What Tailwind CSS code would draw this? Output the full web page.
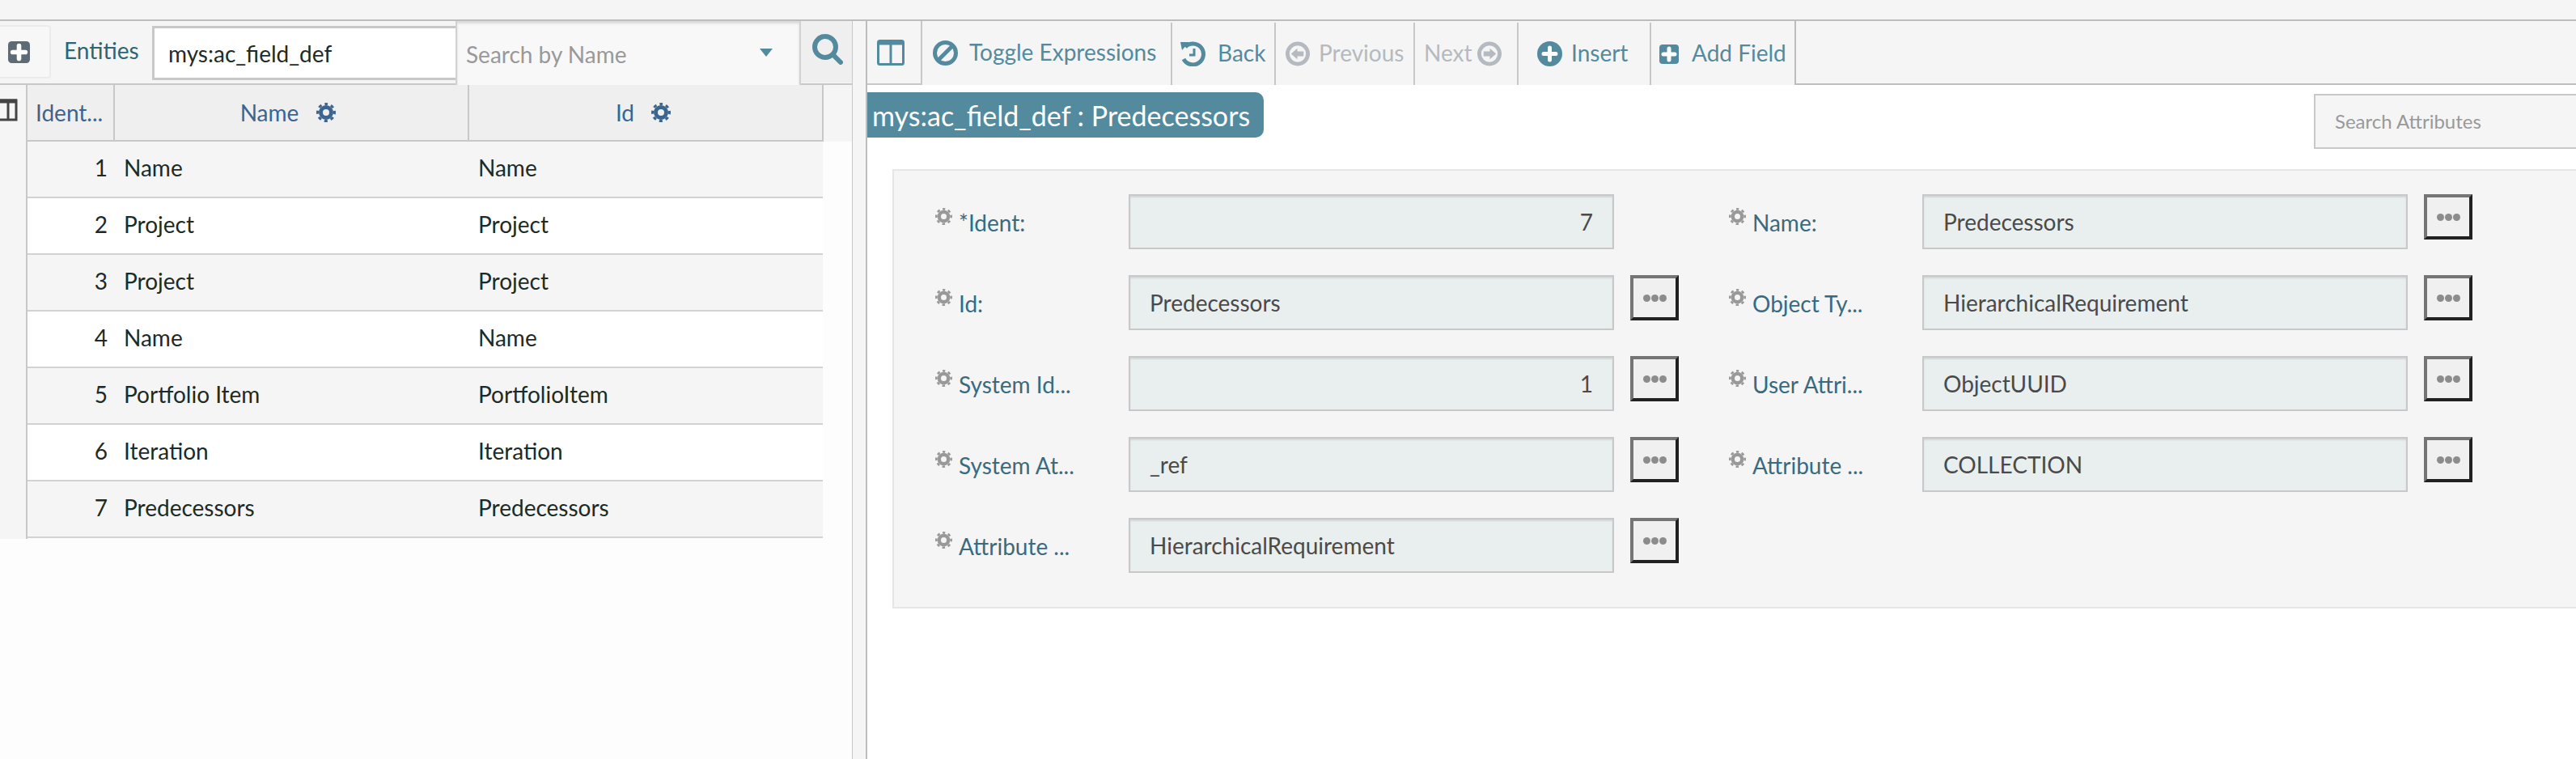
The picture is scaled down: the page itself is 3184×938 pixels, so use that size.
<!DOCTYPE html>
<html lang="en">
  <head>
    <meta charset="UTF-8" />
    <title>Entities</title>
    <script src="https://cdn.jsdelivr.net/npm/@tailwindcss/browser@4"></script>
  </head>

  <body class="font-['Lato',sans-serif] text-[28px] bg-white h-[938px] overflow-hidden flex flex-col">
    <!-- shared icons -->
    <svg class="hidden">
      <symbol id="gear" viewBox="0 0 24 24">
        <circle cx="12" cy="12" r="6.5" fill="none" stroke="currentColor" stroke-width="5" />
        <circle cx="12" cy="12" r="10.5" fill="none" stroke="currentColor" stroke-width="3" stroke-dasharray="4.12 4.12" stroke-dashoffset="2.06" transform="rotate(-90 12 12)" />
      </symbol>
      <symbol id="plus-square" viewBox="0 0 24 24">
        <rect width="24" height="24" rx="4" fill="currentColor" />
        <path d="M12 5v14M5 12h14" stroke="#fff" stroke-width="5" stroke-linecap="round" />
      </symbol>
    </svg>

    <div class="h-[26px] flex-none bg-[#f5f5f5] border-b-2 border-[#bdbdbd]"></div>

    <div class="flex flex-1 min-h-0">
      <!-- Left panel -->
      <section class="w-[1053px] flex-none flex flex-col bg-[#fdfdfd]">
        <div class="h-[79px] flex-none flex items-start bg-[#f5f5f5] border-b-2 border-[#c8c8c8]">
          <div class="w-[63px] h-[66px] mt-[5px] flex-none flex items-center pl-[10px] bg-[#f7f7f7] border-2 border-l-0 border-[#ebebeb] rounded-r">
            <svg class="w-[27px] h-[27px] text-[#5d6b74]"><use href="#plus-square" /></svg>
          </div>
          <span class="w-[125px] flex-none pl-[16px] pt-[15px] text-[#2f6573]">Entities</span>
          <div class="w-[375px] h-[67px] mt-[6px] flex-none flex items-center pl-[17px] bg-white border-[3px] border-r-0 border-[#c8c8c8] text-[#1f2b2b]">mys:ac_field_def</div>
          <div class="w-[427px] h-[81px] flex-none flex items-center justify-between pl-[11px] pr-[33px] pt-[2px] bg-[#f8f8f8] border-2 border-t-0 border-[#d2d2d2] shadow-[inset_0_3px_3px_rgba(0,0,0,0.12)] text-[#999]">
            <span>Search by Name</span>
            <svg class="w-[16px] h-[10px] -mt-[4px]" viewBox="0 0 16 10"><path d="M0 0h16l-8 10z" fill="#538a9e" /></svg>
          </div>
          <div class="w-[64px] h-[76px] flex-none flex justify-center pt-[16px] pl-[1px] bg-[#efefef]">
            <svg class="w-[38px] h-[38px]" viewBox="0 0 38 38" fill="none" stroke="#538a9e"><circle cx="16" cy="16" r="13" stroke-width="6" /><path d="M26 26l9 9" stroke-width="6" stroke-linecap="round" /></svg>
          </div>
        </div>

        <div class="flex items-start">
          <div class="w-[34px] h-[561px] flex-none bg-[#f5f5f5] border-r-2 border-[#c8c8c8] pt-[17px]">
            <svg class="w-[22px] h-[28px]" viewBox="0 0 22 28" fill="none" stroke="#444" stroke-width="3"><path d="M0 2h20v24H0M10 2v24" /><path d="M0 3h21" stroke-width="5" /></svg>
          </div>
          <table class="table-fixed border-collapse w-[983px] flex-none">
            <thead>
              <tr class="h-[69px] bg-[#efefef] text-[#3c6491] font-normal">
                <th class="w-[107px] pl-[10px] text-left font-normal border-r-2 border-b-2 border-[#c8c8c8]">Ident...</th>
                <th class="w-[438px] pr-[8px] font-normal border-r-2 border-b-2 border-[#c8c8c8]">
                  <span class="inline-flex items-center gap-[22px]">Name <svg class="w-[24px] h-[24px]"><use href="#gear" /></svg></span>
                </th>
                <th class="w-[438px] pr-[6px] font-normal border-r-2 border-b-2 border-[#c8c8c8]">
                  <span class="inline-flex items-center gap-[21px]">Id <svg class="w-[24px] h-[24px]"><use href="#gear" /></svg></span>
                </th>
              </tr>
            </thead>
            <tbody class="text-[#1c2b26] [&_td]:pb-[4px]">
              <tr class="h-[70px] bg-[#f5f5f5] border-b-2 border-[#d2d2d2]"><td class="text-right pr-[8px]">1</td><td class="pl-[12px]">Name</td><td class="pl-[12px]">Name</td></tr>
              <tr class="h-[70px] bg-white border-b-2 border-[#d2d2d2]"><td class="text-right pr-[8px]">2</td><td class="pl-[12px]">Project</td><td class="pl-[12px]">Project</td></tr>
              <tr class="h-[70px] bg-[#f5f5f5] border-b-2 border-[#d2d2d2]"><td class="text-right pr-[8px]">3</td><td class="pl-[12px]">Project</td><td class="pl-[12px]">Project</td></tr>
              <tr class="h-[70px] bg-white border-b-2 border-[#d2d2d2]"><td class="text-right pr-[8px]">4</td><td class="pl-[12px]">Name</td><td class="pl-[12px]">Name</td></tr>
              <tr class="h-[70px] bg-[#f5f5f5] border-b-2 border-[#d2d2d2]"><td class="text-right pr-[8px]">5</td><td class="pl-[12px]">Portfolio Item</td><td class="pl-[12px]">PortfolioItem</td></tr>
              <tr class="h-[70px] bg-white border-b-2 border-[#d2d2d2]"><td class="text-right pr-[8px]">6</td><td class="pl-[12px]">Iteration</td><td class="pl-[12px]">Iteration</td></tr>
              <tr class="h-[70px] bg-[#f5f5f5] border-b-2 border-[#d2d2d2]"><td class="text-right pr-[8px]">7</td><td class="pl-[12px]">Predecessors</td><td class="pl-[12px]">Predecessors</td></tr>
            </tbody>
          </table>
          <div class="flex-1 h-[70px] bg-[#f5f5f5]"></div>
        </div>
      </section>

      <!-- Divider -->
      <div class="w-[19px] flex-none bg-[#f5f5f5] border-l border-r-2 border-l-[#c8c8c8] border-r-[#bdbdbd]"></div>

      <!-- Right panel -->
      <section class="flex-1 min-w-0 flex flex-col overflow-hidden">
        <div class="h-[79px] flex-none flex bg-[#f5f5f5] text-[#538a9e] [&_span]:mb-[3px]">
          <div class="w-[68px] flex-none flex items-center pl-[12px] border-r-2 border-b-2 border-[#c8c8c8]">
            <svg class="w-[34px] h-[32px]" viewBox="0 0 34 32" fill="none" stroke="#538a9e" stroke-width="3"><rect x="1.5" y="1.5" width="31" height="29" rx="2" /><path d="M17 2v28" /><path d="M1.5 4h31" stroke-width="5" /></svg>
          </div>
          <div class="w-[307px] flex-none flex items-center gap-[14px] pl-[13px]">
            <svg class="w-[31px] h-[31px]" viewBox="0 0 31 31" fill="none" stroke="#538a9e" stroke-width="5"><circle cx="15.5" cy="15.5" r="13" /><path d="M7 24L24 7" /></svg>
            <span>Toggle Expressions</span>
          </div>
          <div class="w-[128px] flex-none flex items-center gap-[15px] pl-[10px] mt-[2px] border-l-2 border-[#c8c8c8]">
            <svg class="w-[31px] h-[31px]" viewBox="0 0 31 31" fill="none" stroke="#538a9e"><path d="M6 7a13 13 0 1 1-2 15" stroke-width="5" /><path d="M0 1l11 0-9 10z" fill="#538a9e" stroke="none" /><path d="M17 9v8h-6" stroke-width="3" /></svg>
            <span>Back</span>
          </div>
          <div class="w-[172px] flex-none flex items-center gap-[11px] pl-[12px] mt-[2px] border-l-2 border-[#c8c8c8] text-[#b4bac0]">
            <svg class="w-[30px] h-[31px]" viewBox="0 0 31 31"><circle cx="15.5" cy="15.5" r="13" fill="none" stroke="#b4bac0" stroke-width="5" /><path d="M7 15.5l8-7v4h8v6h-8v4z" fill="#b4bac0" /></svg>
            <span>Previous</span>
          </div>
          <div class="w-[128px] flex-none flex items-center gap-[6px] pl-[11px] mt-[2px] border-l-2 border-[#c8c8c8] text-[#b4bac0]">
            <span>Next</span>
            <svg class="w-[30px] h-[31px]" viewBox="0 0 31 31"><circle cx="15.5" cy="15.5" r="13" fill="none" stroke="#b4bac0" stroke-width="5" /><path d="M24 15.5l-8-7v4H8v6h8v4z" fill="#b4bac0" /></svg>
          </div>
          <div class="w-[164px] flex-none flex items-center gap-[11px] pl-[23px] mt-[2px] border-l-2 border-[#c8c8c8]">
            <svg class="w-[31px] h-[31px]" viewBox="0 0 31 31"><circle cx="15.5" cy="15.5" r="15.5" fill="#538a9e" /><path d="M15.5 8v15M8 15.5h15" stroke="#fff" stroke-width="5" stroke-linecap="round" /></svg>
            <span>Insert</span>
          </div>
          <div class="w-[179px] flex-none flex items-center gap-[16px] pl-[10px] mt-[2px] border-l-2 border-[#c8c8c8]">
            <svg class="w-[24px] h-[24px] text-[#538a9e]"><use href="#plus-square" /></svg>
            <span>Add Field</span>
          </div>
          <div class="flex-1 border-l-2 border-b-2 border-[#bdbdbd]"></div>
        </div>

        <div class="h-[104px] flex-none flex items-start justify-between">
          <div class="w-[490px] h-[56px] mt-[9px] flex items-center pl-[6px] bg-[#538a9e] text-white text-[34px] whitespace-nowrap rounded-r-[10px]">mys:ac_field_def : Predecessors</div>
          <div class="w-[324px] h-[68px] mt-[11px] flex-none flex items-center pl-[24px] bg-[#f5f5f5] border-2 border-r-0 border-[#c8c8c8] text-[24px] text-[#999]">Search Attributes</div>
        </div>

        <!-- Attribute form -->
        <div class="ml-[31px] h-[543px] flex-none pt-[29px] pl-[51px] bg-[#f5f5f5] border-2 border-r-0 border-[#e6e6e6] grid grid-cols-[981px_981px] auto-rows-[100px] text-[#396a80]">
          <div class="flex">
            <div class="w-[239px] flex-none flex items-start gap-[8px]"><svg class="w-[21px] h-[21px] mt-[17px] text-[#999]"><use href="#gear" /></svg><span class="mt-[17px] leading-[36px]">*Ident:</span></div>
            <div class="w-[600px] h-[68px] flex-none flex items-center justify-end pr-[24px] bg-[#e9eeee] border-2 border-[#c8c8c8] shadow-[inset_0_2px_2px_rgba(0,0,0,0.1)] text-[#4a4a4a]">7</div>
          </div>
          <div class="flex">
            <div class="w-[239px] flex-none flex items-start gap-[8px]"><svg class="w-[21px] h-[21px] mt-[17px] text-[#999]"><use href="#gear" /></svg><span class="mt-[17px] leading-[36px]">Name:</span></div>
            <div class="w-[600px] h-[68px] flex-none flex items-center pl-[24px] bg-[#e9eeee] border-2 border-[#c8c8c8] shadow-[inset_0_2px_2px_rgba(0,0,0,0.1)] text-[#4a4a4a]">Predecessors</div>
            <div class="w-[60px] h-[56px] ml-[20px] flex-none flex items-center justify-center gap-px bg-[#f0f0f0] border-4 border-t-[#757575] border-l-[#757575] border-r-[#212121] border-b-[#212121]"><span class="w-[9px] h-[9px] rounded-full bg-[#8c8c8c]"></span><span class="w-[9px] h-[9px] rounded-full bg-[#8c8c8c]"></span><span class="w-[9px] h-[9px] rounded-full bg-[#8c8c8c]"></span></div>
          </div>

          <div class="flex">
            <div class="w-[239px] flex-none flex items-start gap-[8px]"><svg class="w-[21px] h-[21px] mt-[17px] text-[#999]"><use href="#gear" /></svg><span class="mt-[17px] leading-[36px]">Id:</span></div>
            <div class="w-[600px] h-[68px] flex-none flex items-center pl-[24px] bg-[#e9eeee] border-2 border-[#c8c8c8] shadow-[inset_0_2px_2px_rgba(0,0,0,0.1)] text-[#4a4a4a]">Predecessors</div>
            <div class="w-[60px] h-[56px] ml-[20px] flex-none flex items-center justify-center gap-px bg-[#f0f0f0] border-4 border-t-[#757575] border-l-[#757575] border-r-[#212121] border-b-[#212121]"><span class="w-[9px] h-[9px] rounded-full bg-[#8c8c8c]"></span><span class="w-[9px] h-[9px] rounded-full bg-[#8c8c8c]"></span><span class="w-[9px] h-[9px] rounded-full bg-[#8c8c8c]"></span></div>
          </div>
          <div class="flex">
            <div class="w-[239px] flex-none flex items-start gap-[8px]"><svg class="w-[21px] h-[21px] mt-[17px] text-[#999]"><use href="#gear" /></svg><span class="mt-[17px] leading-[36px]">Object Ty...</span></div>
            <div class="w-[600px] h-[68px] flex-none flex items-center pl-[24px] bg-[#e9eeee] border-2 border-[#c8c8c8] shadow-[inset_0_2px_2px_rgba(0,0,0,0.1)] text-[#4a4a4a]">HierarchicalRequirement</div>
            <div class="w-[60px] h-[56px] ml-[20px] flex-none flex items-center justify-center gap-px bg-[#f0f0f0] border-4 border-t-[#757575] border-l-[#757575] border-r-[#212121] border-b-[#212121]"><span class="w-[9px] h-[9px] rounded-full bg-[#8c8c8c]"></span><span class="w-[9px] h-[9px] rounded-full bg-[#8c8c8c]"></span><span class="w-[9px] h-[9px] rounded-full bg-[#8c8c8c]"></span></div>
          </div>

          <div class="flex">
            <div class="w-[239px] flex-none flex items-start gap-[8px]"><svg class="w-[21px] h-[21px] mt-[17px] text-[#999]"><use href="#gear" /></svg><span class="mt-[17px] leading-[36px]">System Id...</span></div>
            <div class="w-[600px] h-[68px] flex-none flex items-center justify-end pr-[24px] bg-[#e9eeee] border-2 border-[#c8c8c8] shadow-[inset_0_2px_2px_rgba(0,0,0,0.1)] text-[#4a4a4a]">1</div>
            <div class="w-[60px] h-[56px] ml-[20px] flex-none flex items-center justify-center gap-px bg-[#f0f0f0] border-4 border-t-[#757575] border-l-[#757575] border-r-[#212121] border-b-[#212121]"><span class="w-[9px] h-[9px] rounded-full bg-[#8c8c8c]"></span><span class="w-[9px] h-[9px] rounded-full bg-[#8c8c8c]"></span><span class="w-[9px] h-[9px] rounded-full bg-[#8c8c8c]"></span></div>
          </div>
          <div class="flex">
            <div class="w-[239px] flex-none flex items-start gap-[8px]"><svg class="w-[21px] h-[21px] mt-[17px] text-[#999]"><use href="#gear" /></svg><span class="mt-[17px] leading-[36px]">User Attri...</span></div>
            <div class="w-[600px] h-[68px] flex-none flex items-center pl-[24px] bg-[#e9eeee] border-2 border-[#c8c8c8] shadow-[inset_0_2px_2px_rgba(0,0,0,0.1)] text-[#4a4a4a]">ObjectUUID</div>
            <div class="w-[60px] h-[56px] ml-[20px] flex-none flex items-center justify-center gap-px bg-[#f0f0f0] border-4 border-t-[#757575] border-l-[#757575] border-r-[#212121] border-b-[#212121]"><span class="w-[9px] h-[9px] rounded-full bg-[#8c8c8c]"></span><span class="w-[9px] h-[9px] rounded-full bg-[#8c8c8c]"></span><span class="w-[9px] h-[9px] rounded-full bg-[#8c8c8c]"></span></div>
          </div>

          <div class="flex">
            <div class="w-[239px] flex-none flex items-start gap-[8px]"><svg class="w-[21px] h-[21px] mt-[17px] text-[#999]"><use href="#gear" /></svg><span class="mt-[17px] leading-[36px]">System At...</span></div>
            <div class="w-[600px] h-[68px] flex-none flex items-center pl-[24px] bg-[#e9eeee] border-2 border-[#c8c8c8] shadow-[inset_0_2px_2px_rgba(0,0,0,0.1)] text-[#4a4a4a]">_ref</div>
            <div class="w-[60px] h-[56px] ml-[20px] flex-none flex items-center justify-center gap-px bg-[#f0f0f0] border-4 border-t-[#757575] border-l-[#757575] border-r-[#212121] border-b-[#212121]"><span class="w-[9px] h-[9px] rounded-full bg-[#8c8c8c]"></span><span class="w-[9px] h-[9px] rounded-full bg-[#8c8c8c]"></span><span class="w-[9px] h-[9px] rounded-full bg-[#8c8c8c]"></span></div>
          </div>
          <div class="flex">
            <div class="w-[239px] flex-none flex items-start gap-[8px]"><svg class="w-[21px] h-[21px] mt-[17px] text-[#999]"><use href="#gear" /></svg><span class="mt-[17px] leading-[36px]">Attribute ...</span></div>
            <div class="w-[600px] h-[68px] flex-none flex items-center pl-[24px] bg-[#e9eeee] border-2 border-[#c8c8c8] shadow-[inset_0_2px_2px_rgba(0,0,0,0.1)] text-[#4a4a4a]">COLLECTION</div>
            <div class="w-[60px] h-[56px] ml-[20px] flex-none flex items-center justify-center gap-px bg-[#f0f0f0] border-4 border-t-[#757575] border-l-[#757575] border-r-[#212121] border-b-[#212121]"><span class="w-[9px] h-[9px] rounded-full bg-[#8c8c8c]"></span><span class="w-[9px] h-[9px] rounded-full bg-[#8c8c8c]"></span><span class="w-[9px] h-[9px] rounded-full bg-[#8c8c8c]"></span></div>
          </div>

          <div class="flex">
            <div class="w-[239px] flex-none flex items-start gap-[8px]"><svg class="w-[21px] h-[21px] mt-[17px] text-[#999]"><use href="#gear" /></svg><span class="mt-[17px] leading-[36px]">Attribute ...</span></div>
            <div class="w-[600px] h-[68px] flex-none flex items-center pl-[24px] bg-[#e9eeee] border-2 border-[#c8c8c8] shadow-[inset_0_2px_2px_rgba(0,0,0,0.1)] text-[#4a4a4a]">HierarchicalRequirement</div>
            <div class="w-[60px] h-[56px] ml-[20px] flex-none flex items-center justify-center gap-px bg-[#f0f0f0] border-4 border-t-[#757575] border-l-[#757575] border-r-[#212121] border-b-[#212121]"><span class="w-[9px] h-[9px] rounded-full bg-[#8c8c8c]"></span><span class="w-[9px] h-[9px] rounded-full bg-[#8c8c8c]"></span><span class="w-[9px] h-[9px] rounded-full bg-[#8c8c8c]"></span></div>
          </div>
        </div>
      </section>
    </div>
  </body>
</html>
